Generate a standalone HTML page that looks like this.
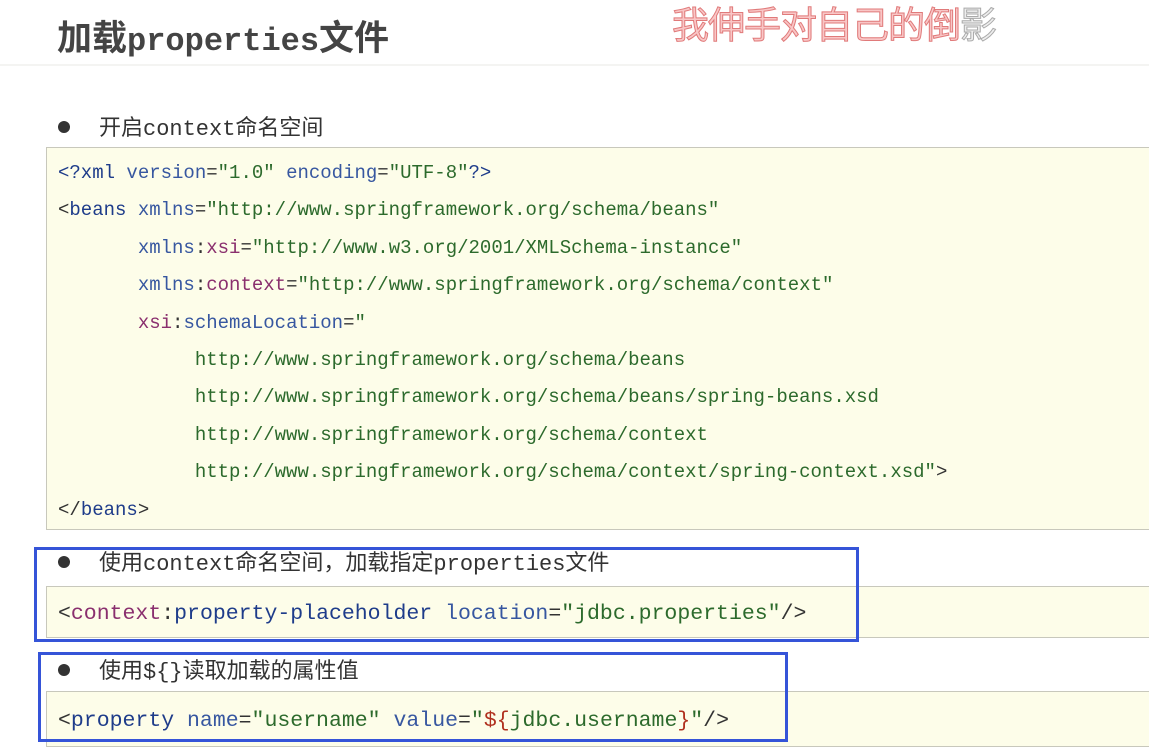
<!DOCTYPE html>
<html><head><meta charset="utf-8"><style>
body{margin:0;width:1149px;height:751px;background:#fff;position:relative;overflow:hidden;font-family:"Liberation Sans","Noto Sans CJK SC",sans-serif;}
.a{position:absolute;}
.title{left:57px;top:10px;font-size:35px;font-weight:bold;color:#444;white-space:nowrap;}
.title .m{font-family:"Liberation Mono","DejaVu Sans Mono",monospace;font-weight:bold;font-size:32px;}
.hdr{left:0;top:64px;width:1149px;height:2px;background:#f4f4f2;}
.wm{left:672px;top:-5px;font-size:37px;font-family:"Noto Sans CJK SC",sans-serif;color:#f9c6c6;-webkit-text-stroke:1px #e07a7a;letter-spacing:-1px;white-space:nowrap;}
.wm span{color:#eee;-webkit-text-stroke:1px #aaa;}
.bl{font-size:22px;color:#333;font-family:"Liberation Mono","Noto Sans CJK SC",monospace;white-space:nowrap;}
.bl i{font-style:normal;display:inline-block;width:12px;height:12px;border-radius:50%;background:#333;margin-right:29px;vertical-align:middle;position:relative;top:-2px;}
.box{background:#fdfde9;border:1px solid #c8c8bc;border-right:none;left:46px;width:1103px;}
pre{margin:0;font-family:"Liberation Mono","DejaVu Sans Mono",monospace;font-size:19px;line-height:37.4px;color:#333;position:absolute;left:11px;}
pre.big{font-size:21.5px;}
.t{color:#1e3c8a}.at{color:#3757a0}.s{color:#2c6a2c}.p{color:#8a2f6e}.r{color:#b0301e}
.blue{position:absolute;border:3px solid #3554d8;}
</style></head><body>
<div class="a title">加载<span class="m">properties</span>文件</div>
<div class="a hdr"></div>
<div class="a wm">我伸手对自己的倒<span>影</span></div>

<div class="a bl" style="left:58px;top:110px"><i></i>开启context命名空间</div>
<div class="a box" style="top:147px;height:381px">
<pre style="top:7px"><span class="t">&lt;?xml</span> <span class="at">version</span>=<span class="s">"1.0"</span> <span class="at">encoding</span>=<span class="s">"UTF-8"</span><span class="t">?&gt;</span>
&lt;<span class="t">beans</span> <span class="at">xmlns</span>=<span class="s">"http://www.springframework.org/schema/beans"</span>
       <span class="at">xmlns</span>:<span class="p">xsi</span>=<span class="s">"http://www.w3.org/2001/XMLSchema-instance"</span>
       <span class="at">xmlns</span>:<span class="p">context</span>=<span class="s">"http://www.springframework.org/schema/context"</span>
       <span class="p">xsi</span>:<span class="at">schemaLocation</span>=<span class="s">"</span>
<span class="s">            http://www.springframework.org/schema/beans</span>
<span class="s">            http://www.springframework.org/schema/beans/spring-beans.xsd</span>
<span class="s">            http://www.springframework.org/schema/context</span>
<span class="s">            http://www.springframework.org/schema/context/spring-context.xsd"</span>&gt;
&lt;/<span class="t">beans</span>&gt;</pre>
</div>

<div class="a bl" style="left:58px;top:545px"><i></i>使用context命名空间，加载指定properties文件</div>
<div class="a box" style="top:586px;height:50px">
<pre class="big" style="top:9px">&lt;<span class="p">context</span>:<span class="t">property-placeholder</span> <span class="at">location</span>=<span class="s">"jdbc.properties"</span>/&gt;</pre>
</div>

<div class="a bl" style="left:58px;top:653px"><i></i>使用${}读取加载的属性值</div>
<div class="a box" style="top:691px;height:54px">
<pre class="big" style="top:11px">&lt;<span class="t">property</span> <span class="at">name</span>=<span class="s">"username"</span> <span class="at">value</span>=<span class="s">"</span><span class="r">${</span><span class="s">jdbc.username</span><span class="r">}</span><span class="s">"</span>/&gt;</pre>
</div>

<div class="blue" style="left:34px;top:547px;width:819px;height:89px"></div>
<div class="blue" style="left:38px;top:652px;width:744px;height:84px"></div>
</body></html>
